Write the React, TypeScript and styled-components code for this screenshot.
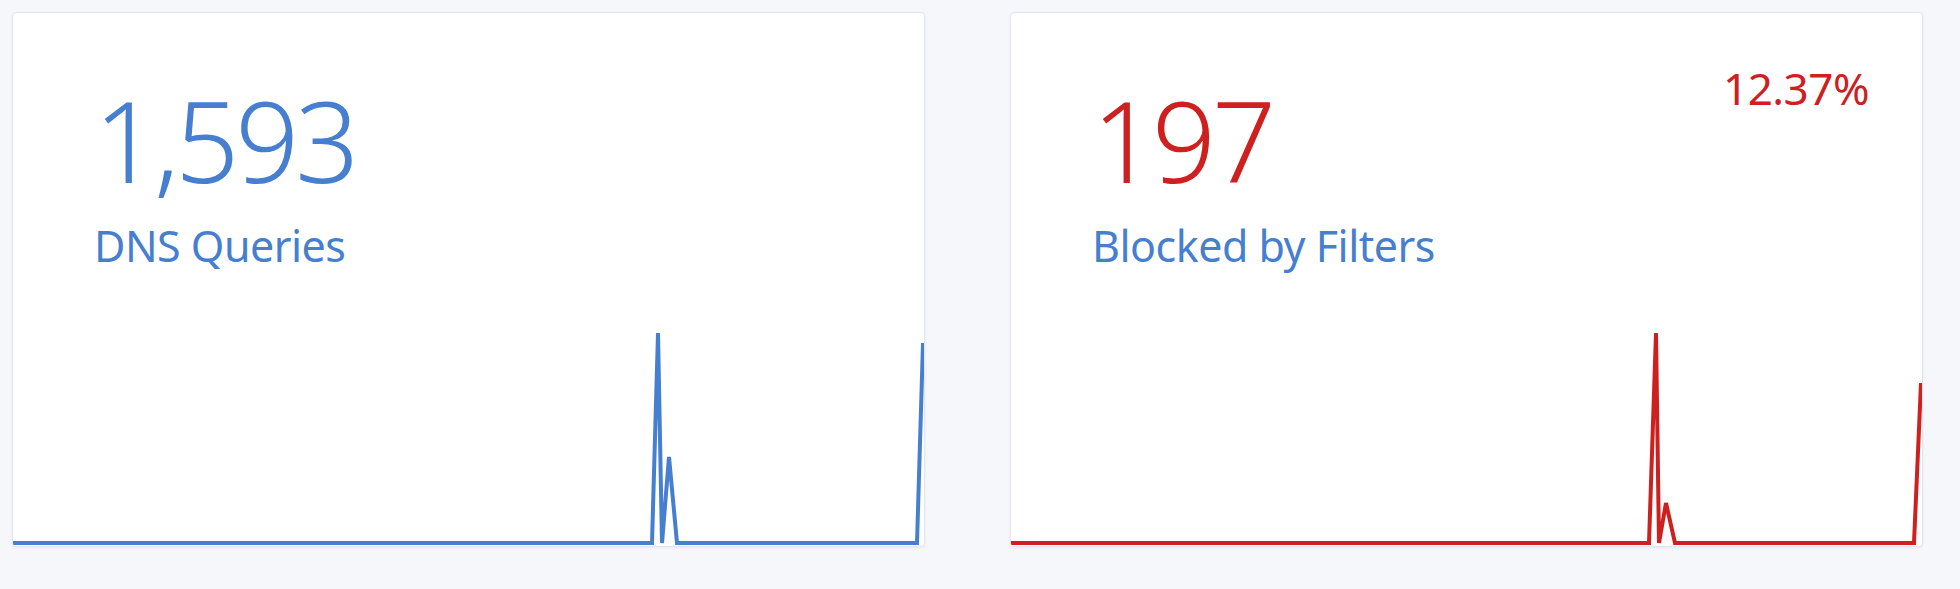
import styled, { createGlobalStyle } from "styled-components";

const GlobalStyle = createGlobalStyle`
  html, body {
    margin: 0;
    padding: 0;
    background: #f5f7fb;
    font-family: "Noto Sans", "Open Sans", "Liberation Sans", sans-serif;
  }
`;

const Page = styled.div`
  display: grid;
  grid-template-columns: 913px 913px;
  column-gap: 85px;
  padding: 12px;
`;

const Card = styled.div`
  box-sizing: border-box;
  height: 535px;
  display: flex;
  flex-direction: column;
  background: #fff;
  border: 1px solid #e1e6ee;
  border-radius: 4px;
  box-shadow: 0 1px 3px rgba(0, 20, 60, 0.06);
  overflow: hidden;
`;

const CardBody = styled.div`
  display: flex;
  justify-content: space-between;
  align-items: flex-start;
  padding: 53px 53px 0 81px;
`;

const Stats = styled.div`
  display: flex;
  flex-direction: column;
`;

const Value = styled.div<{ $color: string }>`
  margin-top: 18px;
  font-size: 112px;
  font-weight: 300;
  line-height: 1;
  letter-spacing: -4px;
  color: ${(p) => p.$color};
`;

const Label = styled.div`
  margin-top: 28px;
  font-size: 43px;
  line-height: 1;
  letter-spacing: -0.5px;
  color: #467fcf;
`;

const Percent = styled.div`
  font-size: 44px;
  line-height: 1;
  letter-spacing: -0.5px;
  color: #cd201f;
`;

const Chart = styled.svg`
  display: block;
  margin-top: auto;
  width: 100%;
  height: 250px;
`;

type Point = [number, number];

interface StatCardProps {
  value: string;
  label: string;
  color: string;
  percent?: string;
  points: Point[];
}

function StatCard({ value, label, color, percent, points }: StatCardProps) {
  return (
    <Card>
      <CardBody>
        <Stats>
          <Value $color={color}>{value}</Value>
          <Label>{label}</Label>
        </Stats>
        {percent && <Percent>{percent}</Percent>}
      </CardBody>
      <Chart viewBox="0 0 911 250" preserveAspectRatio="none">
        <polyline
          points={points.map((p) => p.join(",")).join(" ")}
          fill="none"
          stroke={color}
          strokeWidth={4}
        />
      </Chart>
    </Card>
  );
}

const BASE = 247;

const queries: Point[] = [
  [0, BASE],
  [639, BASE],
  [645, 37],
  [649, BASE],
  [656, 161],
  [664, BASE],
  [904, BASE],
  [910, 47],
];

const blocked: Point[] = [
  [0, BASE],
  [638, BASE],
  [645, 37],
  [648, BASE],
  [655, 207],
  [664, BASE],
  [903, BASE],
  [910, 87],
];

export default function App() {
  return (
    <>
      <GlobalStyle />
      <Page>
        <StatCard value="1,593" label="DNS Queries" color="#467fcf" points={queries} />
        <StatCard
          value="197"
          label="Blocked by Filters"
          color="#cd201f"
          percent="12.37%"
          points={blocked}
        />
      </Page>
    </>
  );
}
